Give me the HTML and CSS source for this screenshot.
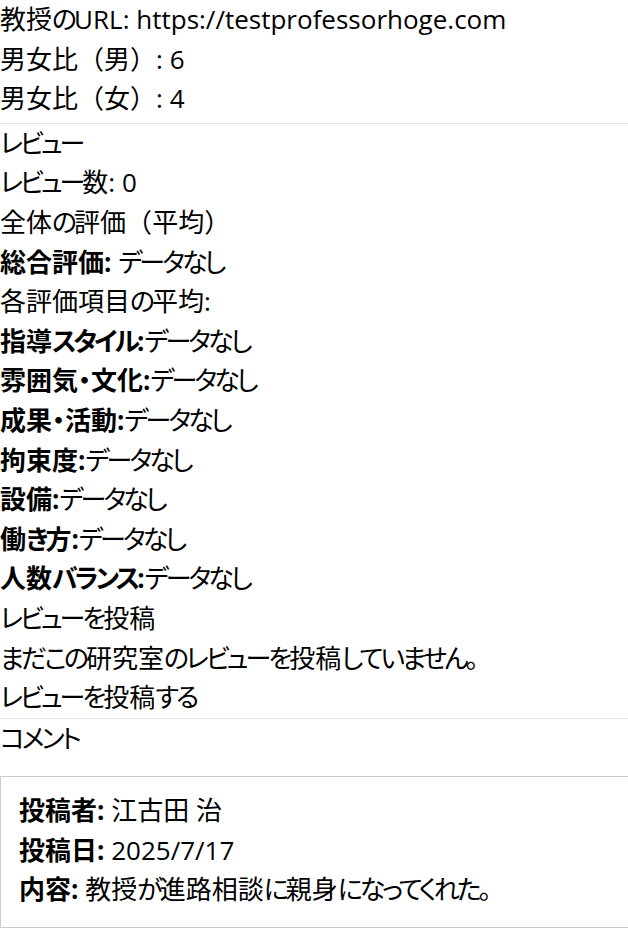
FILE: index.html
```html
<!DOCTYPE html>
<html lang="ja">
<head>
<meta charset="utf-8">
<link rel="stylesheet" href="styles.css">
</head>
<body>
<section class="sec first">
  <div class="row">教授<span class="k">の</span><span class="lat">URL: https://testprofessorhoge.com</span></div>
  <div class="row">男女比<span class="fw">（</span>男<span class="fw">）</span><span class="lat">: 6</span></div>
  <div class="row">男女比<span class="fw">（</span>女<span class="fw">）</span><span class="lat">: 4</span></div>
</section>
<section class="sec">
  <div class="row"><span class="k">レビュー</span></div>
  <div class="row"><span class="k">レビュー</span>数<span class="lat">: 0</span></div>
  <div class="row">全体<span class="k">の</span>評価<span class="fw">（</span>平均<span class="fw">）</span></div>
  <div class="row"><b>総合評価:</b> <span class="k">データなし</span></div>
  <div class="row">各評価項目<span class="k">の</span>平均:</div>
  <div class="row"><b>指導<span class="k">スタイル</span>:</b><span class="k">データなし</span></div>
  <div class="row"><b>雰囲気・文化:</b><span class="k">データなし</span></div>
  <div class="row"><b>成果・活動:</b><span class="k">データなし</span></div>
  <div class="row"><b>拘束度:</b><span class="k">データなし</span></div>
  <div class="row"><b>設備:</b><span class="k">データなし</span></div>
  <div class="row"><b>働<span class="k">き</span>方:</b><span class="k">データなし</span></div>
  <div class="row"><b>人数<span class="k">バランス</span>:</b><span class="k">データなし</span></div>
  <div class="row"><span class="k">レビューを</span>投稿</div>
  <div class="row"><span class="k">まだこの</span>研究室<span class="k">のレビューを</span>投稿<span class="k">していません。</span></div>
  <div class="row"><span class="k">レビューを</span>投稿<span class="k">する</span></div>
</section>
<section class="sec comments">
  <div class="row"><span class="k">コメント</span></div>
  <div class="comment">
    <div class="row"><b>投稿者:</b> 江古田 治</div>
    <div class="row"><b>投稿日:</b> <span class="lat">2025/7/17</span></div>
    <div class="row"><b>内容:</b> 教授<span class="k">が</span>進路相談<span class="k">に</span>親身<span class="k">になってくれた。</span></div>
  </div>
</section>
</body>
</html>
```
FILE: styles.css
```css
html { overflow-x: hidden; }
body {
  margin: 0;
  font-family: "Open Sans", "Noto Sans CJK JP", sans-serif;
  font-size: 26px;
  font-feature-settings: "palt";
  color: #000;
  background: #fff;
}
.sec { border-bottom: 1px solid #e6e6e6; }
.sec.first { padding-bottom: 4px; }
.sec.comments { border-bottom: none; }
.row { line-height: 39.6px; white-space: nowrap; }
b { font-weight: 700; }
.k { letter-spacing: -3px; }
.fw { font-feature-settings: normal; }
.lat { letter-spacing: 0; }
.comment {
  margin: 18px -1px 0 0;
  border: 1px solid #cccccc;
  padding: 14px 18px 17px;
}
```
